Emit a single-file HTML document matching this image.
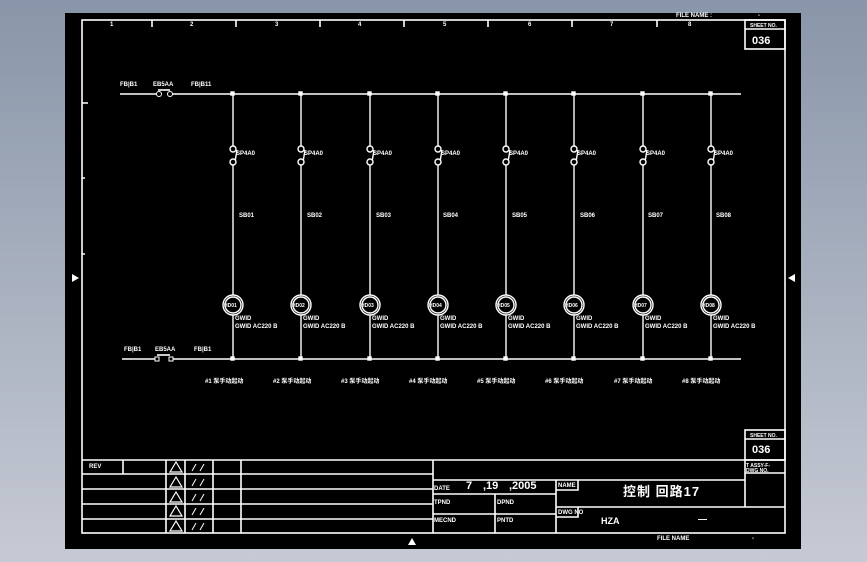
<!DOCTYPE html>
<html><head><meta charset="utf-8"><style>
html,body{margin:0;padding:0;width:867px;height:562px;overflow:hidden;background:linear-gradient(#8996a9,#c6cad4);}
svg{position:absolute;left:0;top:0}
text{font-family:"Liberation Sans","Noto Sans CJK SC",sans-serif;fill:#fff;font-weight:bold}
</style></head><body>
<svg width="867" height="562" viewBox="0 0 867 562">
<defs>
<g id="br" stroke="#fff" fill="none" stroke-width="1.4">
<line x1="0" y1="94" x2="0" y2="146"/>
<circle cx="0" cy="149" r="3" fill="#000"/>
<line x1="2" y1="162" x2="4" y2="150"/>
<circle cx="0" cy="162" r="3" fill="#000"/>
<line x1="0" y1="165" x2="0" y2="295"/>
<circle cx="0" cy="305" r="10"/>
<circle cx="0" cy="305" r="8"/>
<line x1="0" y1="315" x2="0" y2="359"/>
<rect x="-2" y="92" width="3" height="3" fill="#fff"/>
<rect x="-2" y="357" width="3" height="3" fill="#fff"/>
</g>
<path id="tri" d="M-6,10 L0,0 L6,10 Z" fill="none" stroke="#fff" stroke-width="1.2"/>
</defs>
<rect x="65" y="13" width="736" height="536" fill="#000"/>
<g stroke="#fff" fill="none" stroke-width="1.6">
<rect x="82" y="20" width="703" height="513"/>
<path d="M152 20v7M236 20v7M320 20v7M404 20v7M488 20v7M572 20v7M657 20v7M82 103h6M82 178h3M82 254h3"/>
<line x1="120" y1="94" x2="158" y2="94"/><line x1="171" y1="94" x2="741" y2="94"/>
<line x1="158" y1="90" x2="170" y2="90"/>
<line x1="122" y1="359" x2="157" y2="359"/><line x1="171" y1="359" x2="741" y2="359"/>
<line x1="157" y1="355" x2="170" y2="355"/>
<rect x="745" y="20" width="40" height="29"/><line x1="745" y1="29" x2="785" y2="29"/>
<rect x="745" y="430" width="40" height="30"/><line x1="745" y1="439" x2="785" y2="439"/>
<line x1="82" y1="460" x2="785" y2="460"/>
<path d="M82 474h351M82 489h351M82 504h351M82 519h351"/>
<path d="M123 460v14M166 460v73M185 460v73M213 460v73M241 460v73M433 460v73"/>
<path d="M433 480h312M433 494h123M433 514h123M495 494v39M556 480v53M556 507h229M745 460v47M745 473h40"/>
<path d="M556 490h22v-10M556 517h22v-10"/>
</g>
<circle cx="159" cy="94" r="2.5" fill="#000" stroke="#fff"/><circle cx="170" cy="94" r="2.5" fill="#000" stroke="#fff"/>
<rect x="155" y="357" width="4" height="4" fill="#000" stroke="#fff"/><rect x="169" y="357" width="4" height="4" fill="#000" stroke="#fff"/>
<use href="#br" x="233"/><use href="#br" x="301"/><use href="#br" x="370"/><use href="#br" x="438"/>
<use href="#br" x="506"/><use href="#br" x="574"/><use href="#br" x="643"/><use href="#br" x="711"/>
<g font-size="6">
<text x="120" y="86">FB|B1</text><text x="153" y="86">EB5AA</text><text x="191" y="86">FB|B11</text>
<text x="124" y="351">FB|B1</text><text x="155" y="351">EB5AA</text><text x="194" y="351">FB|B1</text>
<text x="110" y="26">1</text><text x="190" y="26">2</text><text x="275" y="26">3</text><text x="358" y="26">4</text><text x="443" y="26">5</text><text x="528" y="26">6</text><text x="610" y="26">7</text><text x="688" y="26">8</text>
<text x="676" y="17">FILE NAME :</text><text x="758" y="17">-</text>
<text x="750" y="27" font-size="5">SHEET NO.</text><text x="750" y="437" font-size="5">SHEET NO.</text>
<text x="746" y="467" font-size="5">T ASSY-F-</text><text x="746" y="472" font-size="5">DWG NO.</text>
<text x="89" y="468">REV</text>
<text x="434" y="490">DATE</text><text x="434" y="504">TPND</text><text x="497" y="504">DPND</text><text x="434" y="522">MECND</text><text x="497" y="522">PNTD</text>
<text x="558" y="487">NAME</text><text x="558" y="514">DWG NO</text>
<text x="657" y="540">FILE NAME</text><text x="752" y="540">-</text>
</g>
<g font-size="6">
<text x="236" y="155">SP4A0</text><text x="304" y="155">SP4A0</text><text x="373" y="155">SP4A0</text><text x="441" y="155">SP4A0</text><text x="509" y="155">SP4A0</text><text x="577" y="155">SP4A0</text><text x="646" y="155">SP4A0</text><text x="714" y="155">SP4A0</text>
<text x="239" y="217">SB01</text><text x="307" y="217">SB02</text><text x="376" y="217">SB03</text><text x="443" y="217">SB04</text><text x="512" y="217">SB05</text><text x="580" y="217">SB06</text><text x="648" y="217">SB07</text><text x="716" y="217">SB08</text>
<g font-size="5"><text x="224" y="307">HD01</text><text x="292" y="307">HD02</text><text x="361" y="307">HD03</text><text x="429" y="307">HD04</text><text x="497" y="307">HD05</text><text x="565" y="307">HD06</text><text x="634" y="307">HD07</text><text x="702" y="307">HD08</text></g>
<text x="235" y="320">GWID</text><text x="303" y="320">GWID</text><text x="372" y="320">GWID</text><text x="440" y="320">GWID</text><text x="508" y="320">GWID</text><text x="576" y="320">GWID</text><text x="645" y="320">GWID</text><text x="713" y="320">GWID</text>
<text x="235" y="328">GWID AC220 B</text><text x="303" y="328">GWID AC220 B</text><text x="372" y="328">GWID AC220 B</text><text x="440" y="328">GWID AC220 B</text><text x="508" y="328">GWID AC220 B</text><text x="576" y="328">GWID AC220 B</text><text x="645" y="328">GWID AC220 B</text><text x="713" y="328">GWID AC220 B</text>
<text x="205" y="383">#1 泵手动起动</text><text x="273" y="383">#2 泵手动起动</text><text x="341" y="383">#3 泵手动起动</text><text x="409" y="383">#4 泵手动起动</text><text x="477" y="383">#5 泵手动起动</text><text x="545" y="383">#6 泵手动起动</text><text x="614" y="383">#7 泵手动起动</text><text x="682" y="383">#8 泵手动起动</text>
</g>
<text x="752" y="44" font-size="11" font-weight="normal">036</text><text x="752" y="453" font-size="11" font-weight="normal">036</text>
<text x="466" y="489" font-size="11" font-weight="normal">7</text><text x="483" y="489" font-size="11" font-weight="normal">,19</text><text x="509" y="489" font-size="11" font-weight="normal">,2005</text>
<text x="601" y="524" font-size="9" font-weight="normal">HZA</text><text x="698" y="522" font-size="9">—</text>
<text x="623" y="496" font-size="13" letter-spacing="1">控制 回路17</text>
<g>
<use href="#tri" x="176" y="462"/><use href="#tri" x="176" y="477"/><use href="#tri" x="176" y="492"/><use href="#tri" x="176" y="506"/><use href="#tri" x="176" y="521"/>
</g>
<g stroke="#fff" stroke-width="1">
<path d="M192 471l4-7M200 471l4-7M192 486l4-7M200 486l4-7M192 501l4-7M200 501l4-7M192 515l4-7M200 515l4-7M192 530l4-7M200 530l4-7"/>
</g>
<path d="M72 282l7-4-7-4z" fill="#fff"/>
<path d="M795 274l-7 4 7 4z" fill="#fff"/>
<path d="M408 545l4-7 4 7z" fill="#fff"/>
</svg>
</body></html>
